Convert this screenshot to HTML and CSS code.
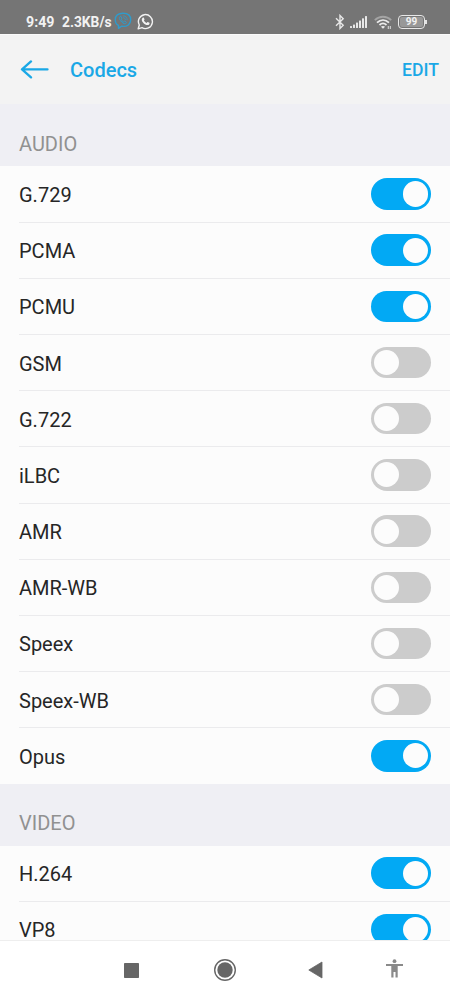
FILE: index.html
```html
<!DOCTYPE html>
<html lang="en">
<head>
<meta charset="utf-8">
<title>Codecs</title>
<link rel="stylesheet" href="styles.css">
</head>
<body>
<div class="screen">
  <div class="status">
    <span class="time">9:49</span>
    <span class="speed">2.3KB/s</span>
    <svg class="chat-blue" width="18" height="18" viewBox="0 0 18 18" fill="none" stroke="#2f9bcb" stroke-width="1.4" stroke-linecap="round" stroke-linejoin="round"><path d="M9 1.200C4 1.200 1.300 3.500 1.300 7.700c0 2.800 1.200 4.800 3.200 5.800v2.900l3-2.200c6 .8 9.200-2 9.200-6.500C16.700 3.500 13.700 1.200 9 1.200Z"/><path d="M6.300 4.300C4.500 5 5.300 7 6.500 8.700c1.400 2 3.600 3.200 4.800 3 .8-.2 1.400-1.100.9-1.600l-1.500-1-1.200.7C8.300 9.200 7.400 8.200 7.200 7l.8-.8-1.200-1.800Z" stroke-width="1"/><path d="M9.200 3.800c2.600.2 3.900 1.600 4 4M9.500 5.700c1.100.2 1.700.8 1.900 2" stroke-width=".8"/></svg>
    <svg class="chat-white" width="17" height="17" viewBox="0 0 17 17"><path d="M1.200 15.800 2.300 12A7 7 0 1 1 5 14.700Z" fill="none" stroke="#f2f2f2" stroke-width="1.400" stroke-linejoin="round"/><path d="M5.700 4.700c.5-.4 1-.3 1.200.2l.6 1.400c.1.400-.5.900-.6 1.100.6 1.200 1.500 2 2.700 2.500.4-.2.800-1 1.200-.9l1.600.8c.4.300 0 1.500-.5 1.900-1 .7-2.400.3-3.600-.3-1.700-.9-3.200-2.600-3.500-4.200-.1-1 .3-2 .9-2.500Z" fill="#f2f2f2"/></svg>
    <span class="spacer"></span>
    <svg class="bluetooth" width="10" height="16" viewBox="0 0 10 16" fill="none" stroke="#e8e8e8" stroke-width="1.400"><path d="m1 4.300 7.200 7L5 14.500v-13l3.200 3.200-7.200 7"/></svg>
    <svg class="signal" width="18" height="14" viewBox="0 0 18 14" fill="#e8e8e8"><rect x="0" y="11" width="2" height="2" rx=".5"/><rect x="3" y="9.500" width="2" height="3.500" rx=".5"/><rect x="6" y="7.500" width="2" height="5.500" rx=".5"/><rect x="9" y="5.500" width="2" height="7.500" rx=".5"/><rect x="12" y="3.200" width="2" height="9.800" rx=".5"/><rect x="15" y="1" width="2" height="12" rx=".5"/></svg>
    <svg class="wifi" width="18" height="15" viewBox="0 0 18 15" fill="none" stroke-width="1.800"><path d="M.8 5.200c4.800-4.600 11.600-4.600 16.400 0" stroke="#a4a4a4"/><path d="M3 7.600c3.600-3.400 8.400-3.400 12 0M5.500 10c2.200-2 4.800-2 7 0" stroke="#ececec"/><path d="m6.900 11.700 2.100 2 2.100-2c-1.300-1-2.900-1-4.200 0Z" fill="#ececec"/><path d="M14.300 14v-3m2 0v3" stroke="#d8d8d8" stroke-width="1.100"/></svg>
    <div class="battery"><span>99</span></div>
  </div>

  <header class="bar">
    <svg class="back" width="30" height="20" viewBox="0 0 30 20" fill="none" stroke="#1aa8e6" stroke-width="2.300" stroke-linecap="round" stroke-linejoin="round"><path d="M27.500 10.400H2M11 2.400l-9 8 9 8"/></svg>
    <h1>Codecs</h1>
    <span class="edit">EDIT</span>
  </header>

  <main class="list">
    <h2>AUDIO</h2>
    <div class="row"><span>G.729</span><i class="switch on"></i></div>
    <div class="row"><span>PCMA</span><i class="switch on"></i></div>
    <div class="row"><span>PCMU</span><i class="switch on"></i></div>
    <div class="row"><span>GSM</span><i class="switch"></i></div>
    <div class="row"><span>G.722</span><i class="switch"></i></div>
    <div class="row"><span>iLBC</span><i class="switch"></i></div>
    <div class="row"><span>AMR</span><i class="switch"></i></div>
    <div class="row"><span>AMR-WB</span><i class="switch"></i></div>
    <div class="row"><span>Speex</span><i class="switch"></i></div>
    <div class="row"><span>Speex-WB</span><i class="switch"></i></div>
    <div class="row last"><span>Opus</span><i class="switch on"></i></div>
    <h2 class="video">VIDEO</h2>
    <div class="row"><span>H.264</span><i class="switch on"></i></div>
    <div class="row"><span>VP8</span><i class="switch on"></i></div>
  </main>

  <nav class="nav">
    <svg class="recent" width="15" height="15" viewBox="0 0 15 15"><rect width="15" height="15" rx=".7" fill="#666"/></svg>
    <svg class="home" width="24" height="24" viewBox="0 0 24 24"><circle cx="12" cy="12" r="10.300" fill="none" stroke="#666" stroke-width="1.400"/><circle cx="12" cy="12" r="7.700" fill="#666"/></svg>
    <svg class="prev" width="15" height="18" viewBox="0 0 15 18"><path d="M.8 9 14 1v16Z" fill="#666" stroke="#666" stroke-width=".8" stroke-linejoin="round"/></svg>
    <svg class="access" width="17" height="19" viewBox="0 0 17 19" fill="#8a8a8a"><circle cx="8.500" cy="2.200" r="1.900"/><path d="M0 5h17v2h-5.300v11.500H9.500V13h-2v5.500H5.300V7H0Z"/></svg>
  </nav>
</div>
</body>
</html>
```
FILE: styles.css
```css
* { box-sizing: border-box; }

body {
  margin: 0;
  font-family: Roboto, "Liberation Sans", sans-serif;
  background: #fff;
}

.screen {
  width: 450px;
  height: 1000px;
  display: flex;
  flex-direction: column;
  overflow: hidden;
}

.status {
  flex: none;
  height: 34px;
  padding: 10px 23px 0 26px;
  display: flex;
  align-items: center;
  background: #757575;
  color: #f2f2f2;
  font-size: 14px;
  font-weight: 700;
  line-height: 20px;
}

.time { width: 36px; font-size: 14.200px; }
.speed { width: 52px; font-size: 13.800px; white-space: nowrap; }
.chat-blue { margin-top: -2px; }
.chat-white { margin: -1px 0 0 5px; }
.spacer { flex: 1; }
.bluetooth { margin-right: 5px; }
.signal { margin-right: 6px; }
.wifi { margin-right: 6px; }

.battery {
  position: relative;
  width: 27px;
  height: 14px;
  margin-right: 2px;
  padding: 1px;
  border: 1.500px solid #e8e8e8;
  border-radius: 4px;
}

.battery span {
  display: block;
  height: 10px;
  border-radius: 2px;
  background: #989898;
  font-size: 10px;
  line-height: 10px;
  text-align: center;
}

.battery::after {
  content: "";
  position: absolute;
  right: -3px;
  top: 4px;
  width: 2px;
  height: 4px;
  background: #e4e4e4;
}

.bar {
  flex: none;
  height: 70px;
  padding: 0 11px 1px 20px;
  display: flex;
  align-items: center;
  border-top: 1px solid #fafafa;
  background: #f3f3f3;
  color: #1aa8e6;
}

.bar h1 {
  flex: 1;
  margin: 1px 0 0 20px;
  font-size: 20px;
  font-weight: 500;
}

.edit { padding-top: 2px; font-size: 17.600px; font-weight: 500; }

.list {
  flex: none;
  height: 836px;
  overflow: hidden;
  background: #fcfcfc;
}

.list h2 {
  height: 62.400px;
  margin: 0;
  padding: 28px 0 0 19px;
  background: #efeff4;
  color: #919191;
  font-size: 20px;
  font-weight: 400;
  line-height: 24px;
}

.list .video { height: 61.200px; padding-top: 27px; }

.row {
  height: 56.200px;
  margin-left: 19px;
  padding-right: 19px;
  display: flex;
  align-items: center;
  justify-content: space-between;
  border-bottom: 1px solid #ebebed;
  color: #262626;
  font-size: 20px;
  line-height: 18px;
}

.row.last { border-bottom-color: transparent; }

.row span { padding-top: 2px; }

.switch {
  display: flex;
  width: 60px;
  height: 31.500px;
  padding: 3.200px;
  border-radius: 16px;
  background: #ccc;
}

.switch::before {
  content: "";
  width: 25.100px;
  height: 25.100px;
  border-radius: 50%;
  background: #fcfcfc;
}

.switch.on {
  justify-content: flex-end;
  background: #02a9f4;
}

.nav {
  flex: 1;
  display: flex;
  align-items: center;
  padding: 0 0 1px 124px;
  border-top: 1px solid #eee;
  background: #fff;
}

.home { margin-left: 74px; }
.prev { margin-left: 71px; }
.access { margin: -3px 0 0 63px; }
```
